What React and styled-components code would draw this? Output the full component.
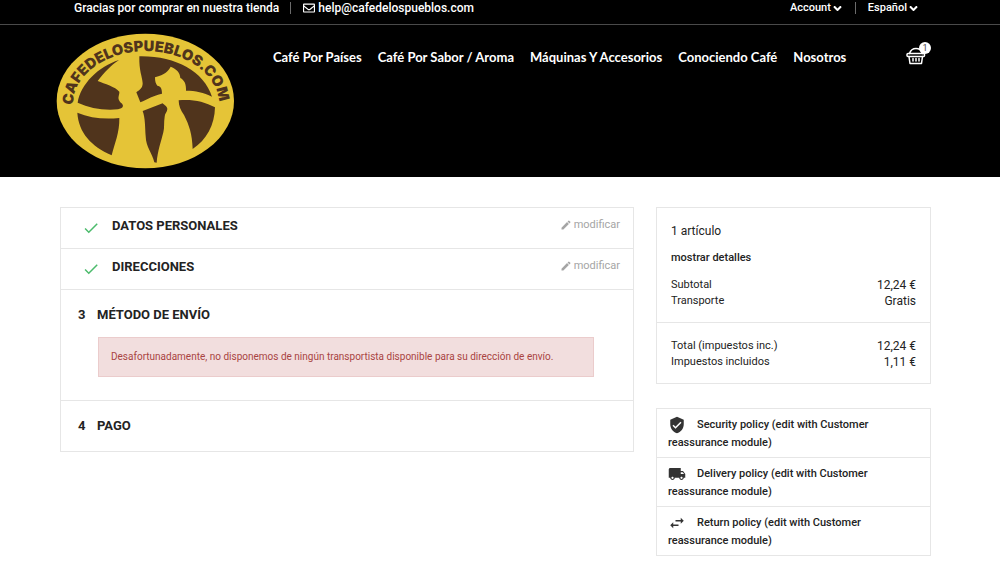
import React from "react";
import styled, { createGlobalStyle } from "styled-components";
import { MdEdit, MdCheck, MdVerifiedUser, MdLocalShipping, MdSwapHoriz } from "react-icons/md";
import { FaRegEnvelope, FaAngleDown } from "react-icons/fa";

const GlobalStyle = createGlobalStyle`
  *, *::before, *::after { box-sizing: border-box; }
  body {
    margin: 0;
    background: #fff;
    color: #232323;
    font-family: Roboto, "Liberation Sans", sans-serif;
    font-size: 12px;
  }
  button { font: inherit; color: inherit; background: none; border: 0; padding: 0; cursor: pointer; }
  a { color: inherit; text-decoration: none; }
  h1, p, ul, dl, dd { margin: 0; padding: 0; }
  ul { list-style: none; }
`;

const Header = styled.header`
  background: #000;
  color: #fff;
`;

const TopBar = styled.div`
  display: flex;
  justify-content: space-between;
  padding: 0 80px 8px 74px;
  border-bottom: 1px solid #4a4a4a;
  font-weight: 500;
  line-height: 16px;
`;

const TopGroup = styled.div`
  display: flex;
  align-items: center;
`;

const Separator = styled.span`
  width: 1px;
  height: 12px;
  margin: 0 12px 0 11px;
  background: #6b6b6b;
`;

const MailLink = styled.a`
  display: flex;
  align-items: center;
  gap: 3px;
`;

const MenuButton = styled.button`
  display: flex;
  align-items: center;
  font-size: 11px;
`;

const MainBar = styled.div`
  display: flex;
  align-items: flex-start;
  padding: 8px 68px 8px 56px;
`;

const LogoLink = styled.a`
  display: block;
  flex: none;
  width: 179px;
  height: 136px;
  svg { display: block; width: 100%; height: 100%; }
  text { font-family: Inter, sans-serif; font-weight: 900; font-size: 44px; fill: #50341c; }
`;

const Nav = styled.nav`
  flex: 1;
  padding: 14px 0 0 38px;
  ul { display: flex; gap: 16px; }
  a {
    font-family: Lato, sans-serif;
    font-size: 13px;
    font-weight: 700;
    line-height: 20px;
    white-space: nowrap;
  }
`;

const CartButton = styled.button`
  position: relative;
  margin-top: 14px;
  padding-right: 6px;
  svg { display: block; width: 20px; height: 18px; }
`;

const CartCount = styled.span`
  position: absolute;
  top: -5px;
  right: 1px;
  width: 12px;
  height: 12px;
  border-radius: 50%;
  background: #fff;
  color: #444;
  font-size: 9px;
  line-height: 12px;
  text-align: center;
`;

const Page = styled.main`
  display: grid;
  grid-template-columns: minmax(0, 574fr) minmax(0, 275fr);
  align-items: start;
  gap: 22px;
  padding: 30px 69px 7px 60px;
`;

const Panel = styled.section`
  border: 1px solid #e6e6e6;
`;

const Step = styled.section`
  padding: ${(p) => (p.$done ? "8px 13px 11px 21px" : "15px 18px 15px 17px")};
  & + & { border-top: 1px solid #e6e6e6; }
`;

const StepHead = styled.div`
  display: flex;
  align-items: flex-start;
`;

const StepMark = styled.span`
  flex: none;
  width: ${(p) => (p.$done ? 30 : 19)}px;
  svg { display: block; width: 18px; height: 18px; margin-top: 3px; color: #4cbb6c; }
`;

const StepTitle = styled.h1`
  flex: 1;
  display: flex;
  font-size: 13px;
  font-weight: 700;
  line-height: 20px;
  text-transform: uppercase;
`;

const EditButton = styled.button`
  display: flex;
  align-items: center;
  gap: 2px;
  padding-top: 1px;
  color: #a5a5a5;
  font-size: 11px;
  line-height: 16px;
`;

const Alert = styled.p`
  margin: 12px 21px 8px 20px;
  padding: 11px 12px;
  border: 1px solid #ebcccc;
  background: #f2dede;
  color: #a94442;
  font-size: 10px;
  line-height: 16px;
`;

const Aside = styled.aside`
  display: grid;
  gap: 24px;
`;

const SummaryBlock = styled.div`
  padding: 15px 14px 13px;
  & + & { border-top: 1px solid #e6e6e6; }
`;

const SummaryLine = styled.p`
  margin-bottom: 11px;
  line-height: 16px;
  a { display: block; font-size: 11px; font-weight: 500; }
`;

const Totals = styled.dl`
  div { display: flex; justify-content: space-between; line-height: 16px; }
  dt { font-size: 11px; }
  dd { font-size: 12px; }
`;

const Policy = styled.li`
  padding: 7px 11px 5px;
  font-size: 11px;
  font-weight: 500;
  line-height: 18px;
  & + & { border-top: 1px solid #e6e6e6; }
  svg { width: 18px; height: 18px; margin-right: 11px; vertical-align: -6px; color: #333; }
`;

function Logo() {
  return (
    <svg viewBox="48 99 537 408" role="img" aria-label="Cafedelospueblos.com">
      <defs>
        <path id="arc" d="M99 315 A219 160 0 0 1 537 312 L537 360" />
      </defs>
      <ellipse cx="316" cy="303" rx="266" ry="202" fill="#e5c437" />
      <g fill="#50341c">
        <path d="M113 308C122 252 176 199 237 180C210 198 194 216 173 243C194 252 226 260 238 275C239 284 232 292 238 302C241 309 249 310 249 318C247 325 241 326 234 328C190 332 150 325 113 308Z" />
        <path d="M298 169C405 167 491 213 516 290C491 277 467 272 438 272C439 252 433 240 421 234C420 219 412 208 392 200C386 213 374 224 345 232C345 244 347 251 352 257C362 258 366 266 366 281C340 287 323 297 301 307L289 277C300 270 308 263 308 250C306 225 297 215 298 169Z" />
        <path d="M112 338C149 354 193 359 238 354C239 398 224 430 215 466C153 438 116 398 112 338Z" />
        <path d="M308 333L368 310C373 316 382 319 382 327C382 335 374 341 374 350C371 367 374 382 370 397C363 426 353 452 350 488L343 487C337 460 318 443 317 409C315 382 316 355 308 333Z" />
        <path d="M416 301C455 297 493 304 525 322C524 376 499 420 458 447C457 403 447 374 432 345C422 331 416 318 416 301Z" />
      </g>
      <text><textPath href="#arc">CAFEDELOSPUEBLOS.COM</textPath></text>
    </svg>
  );
}

function Basket() {
  return (
    <svg viewBox="0 0 20 18" fill="none" stroke="#fff" strokeWidth="1.5" strokeLinejoin="round" strokeLinecap="round">
      <path d="M3.5 6.5C4.5 3.5 7 1.5 10 1.5S15.5 3.5 16.5 6.5" />
      <rect x="1" y="6.5" width="17.5" height="3" rx="1" />
      <path d="M3 9.5L4 16.5H15.5L16.5 9.5M7 11.5V14M10 11.5V14M13 11.5V14" />
    </svg>
  );
}

const links = ["Café Por Países", "Café Por Sabor / Aroma", "Máquinas Y Accesorios", "Conociendo Café", "Nosotros"];

const policies = [
  [MdVerifiedUser, "Security policy (edit with Customer reassurance module)"],
  [MdLocalShipping, "Delivery policy (edit with Customer reassurance module)"],
  [MdSwapHoriz, "Return policy (edit with Customer reassurance module)"],
];

function DoneStep({ title }) {
  return (
    <Step $done>
      <StepHead>
        <StepTitle><StepMark $done><MdCheck /></StepMark>{title}</StepTitle>
        <EditButton type="button"><MdEdit size={12} />modificar</EditButton>
      </StepHead>
    </Step>
  );
}

function OpenStep({ number, title, children }) {
  return (
    <Step>
      <StepTitle><StepMark>{number}</StepMark>{title}</StepTitle>
      {children}
    </Step>
  );
}

function TotalRow({ label, value }) {
  return <div><dt>{label}</dt><dd>{value}</dd></div>;
}

export default function App() {
  return (
    <>
      <GlobalStyle />
      <Header>
        <TopBar>
          <TopGroup>
            <span>Gracias por comprar en nuestra tienda</span>
            <Separator />
            <MailLink href="mailto:help@cafedelospueblos.com">
              <FaRegEnvelope size={12} />help@cafedelospueblos.com
            </MailLink>
          </TopGroup>
          <TopGroup>
            <MenuButton type="button">Account<FaAngleDown size={13} /></MenuButton>
            <Separator />
            <MenuButton type="button">Español<FaAngleDown size={13} /></MenuButton>
          </TopGroup>
        </TopBar>
        <MainBar>
          <LogoLink href="#"><Logo /></LogoLink>
          <Nav>
            <ul>{links.map((l) => <li key={l}><a href="#">{l}</a></li>)}</ul>
          </Nav>
          <CartButton type="button" aria-label="Carrito"><Basket /><CartCount>1</CartCount></CartButton>
        </MainBar>
      </Header>
      <Page>
        <Panel>
          <DoneStep title="Datos personales" />
          <DoneStep title="Direcciones" />
          <OpenStep number="3" title="Método de envío">
            <Alert>Desafortunadamente, no disponemos de ningún transportista disponible para su dirección de envío.</Alert>
          </OpenStep>
          <OpenStep number="4" title="Pago" />
        </Panel>
        <Aside>
          <Panel>
            <SummaryBlock>
              <SummaryLine>1 artículo</SummaryLine>
              <SummaryLine><a href="#">mostrar detalles</a></SummaryLine>
              <Totals>
                <TotalRow label="Subtotal" value="12,24 €" />
                <TotalRow label="Transporte" value="Gratis" />
              </Totals>
            </SummaryBlock>
            <SummaryBlock>
              <Totals>
                <TotalRow label="Total (impuestos inc.)" value="12,24 €" />
                <TotalRow label="Impuestos incluidos" value="1,11 €" />
              </Totals>
            </SummaryBlock>
          </Panel>
          <Panel as="ul">
            {policies.map(([Icon, text]) => <Policy key={text}><Icon />{text}</Policy>)}
          </Panel>
        </Aside>
      </Page>
    </>
  );
}
